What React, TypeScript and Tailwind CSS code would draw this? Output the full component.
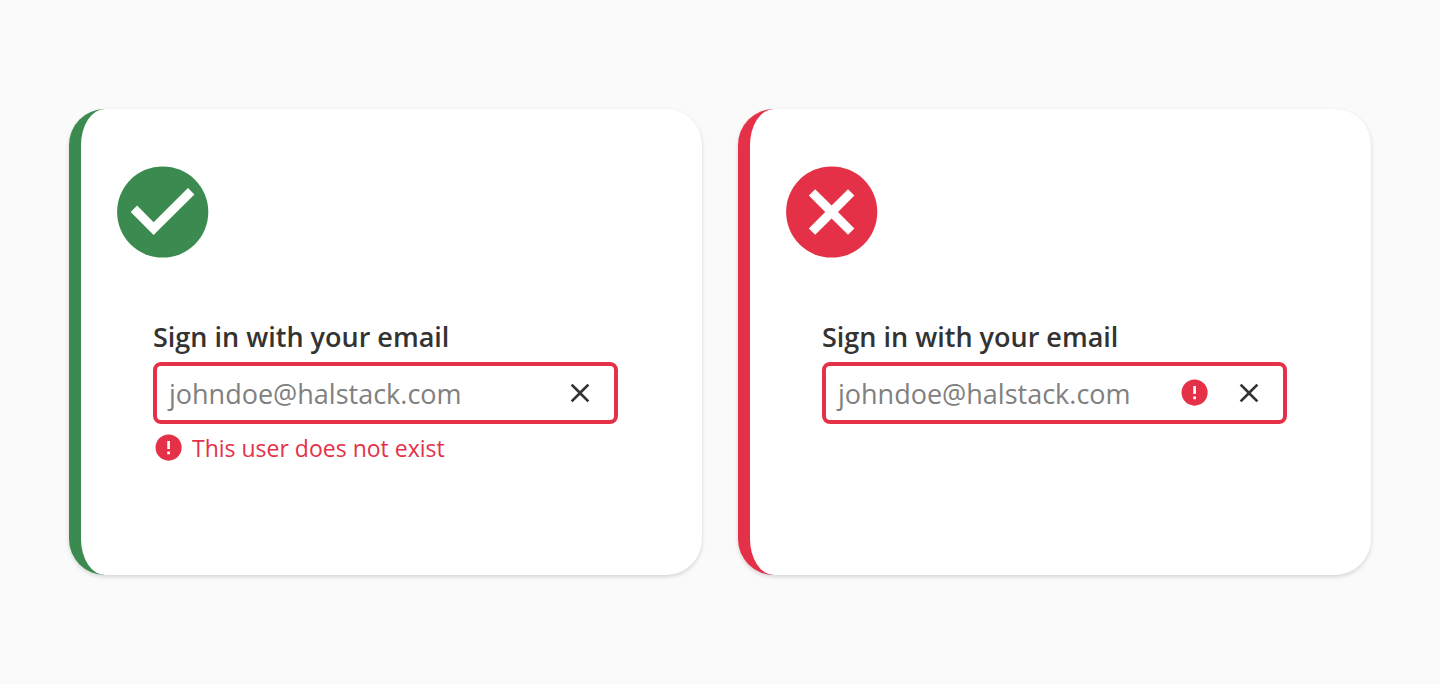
import React from "react";

type Tone = "success" | "error";

function ErrorIcon({ className = "" }: { className?: string }) {
  return (
    <svg viewBox="0 0 24 24" className={`size-8 shrink-0 fill-[#e43148] ${className}`} aria-hidden="true">
      <path d="M11.7 1.9a9.8 9.8 0 1 0 0 19.6 9.8 9.8 0 0 0 0-19.6zm1 14.7h-2v-2h2v2zm0-3.9h-2V6.8h2v5.9z" />
    </svg>
  );
}

function StatusIcon({ tone }: { tone: Tone }) {
  return tone === "success" ? (
    <svg viewBox="0 0 92 92" className="size-[92px]" role="img" aria-label="Do">
      <circle cx="45.7" cy="46" r="45.6" fill="#3b8a4f" />
      <path d="M36.6 69 13.7 46l6.4-6.4 16.5 16.6L71 22l6.4 6.4z" fill="#fff" />
    </svg>
  ) : (
    <svg viewBox="0 0 92 92" className="size-[92px]" role="img" aria-label="Don't">
      <circle cx="45.7" cy="46" r="45.6" fill="#e43148" />
      <path d="M68.4 29.6 62 23.2 45.6 39.6 29.2 23.2 22.8 29.6 39.2 46 22.8 62.4 29.2 68.8 45.6 52.4 62 68.8 68.4 62.4 52 46z" fill="#fff" />
    </svg>
  );
}

function Example({ tone, id }: { tone: Tone; id: string }) {
  const good = tone === "success";
  return (
    <section
      className={`min-w-0 flex-1 rounded-[36px] border-l-12 bg-white pt-[57px] pr-[84px] pb-[103px] pl-9 shadow-[0_2px_4px_rgba(0,0,0,0.15)] ${
        good ? "border-[#3b8a4f]" : "border-[#e43148]"
      }`}
    >
      <StatusIcon tone={tone} />
      <div className="mt-14 pl-9">
        <label htmlFor={id} className="block h-12 pt-1 text-[27px] leading-[38px] font-semibold text-[#333]">
          Sign in with your email
        </label>
        <div className="flex h-[62px] items-center rounded-lg border-4 border-[#e43148] pr-[18px] pl-2">
          <input
            id={id}
            type="email"
            placeholder="johndoe@halstack.com"
            aria-invalid="true"
            className="min-w-0 flex-1 bg-transparent pt-0.5 indent-1 text-[27px] text-[#333] outline-none placeholder:text-[#808080]"
          />
          {!good && <ErrorIcon className="mr-[22px]" />}
          <button type="button" aria-label="Clear" className="size-8 shrink-0">
            <svg viewBox="0 0 24 24" className="size-8 fill-[#333]" aria-hidden="true">
              <path d="M19 6.41 17.59 5 12 10.59 6.41 5 5 6.41 10.59 12 5 17.59 6.41 19 12 13.41 17.59 19 19 17.59 13.41 12z" />
            </svg>
          </button>
        </div>
        <div className="flex h-12 items-center gap-[7px]">
          {good && (
            <>
              <ErrorIcon />
              <p className="text-[23px] leading-8 text-[#e43148]">This user does not exist</p>
            </>
          )}
        </div>
      </div>
    </section>
  );
}

export default function App() {
  return (
    <main className="flex min-h-screen items-center gap-9 bg-[#fafafa] px-[69px] font-['Open_Sans',sans-serif]">
      <Example tone="success" id="email-message" />
      <Example tone="error" id="email-icon" />
    </main>
  );
}
